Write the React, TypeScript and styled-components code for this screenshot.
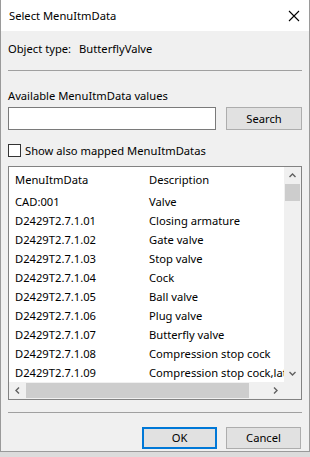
import React from 'react';
import styled, { createGlobalStyle } from 'styled-components';

const GlobalStyle = createGlobalStyle`
  html, body {
    margin: 0;
    padding: 0;
    background: #dcdcdc;
  }
  * {
    box-sizing: border-box;
  }
`

const Window = styled.div`
  width: 310px;
  height: 452px;
  background: #f0f0f0;
  border: 1px solid #9a9a9a;
  border-top: none;
  font-family: "Noto Sans", "Open Sans", sans-serif;
  font-size: 11.2px;
  color: #000;
  display: flex;
  flex-direction: column;
`

const TitleBar = styled.div`
  height: 31px;
  background: #fff;
  display: flex;
  align-items: center;
  justify-content: space-between;
  padding-left: 8px;
  padding-right: 9px;
`

const Title = styled.span`
  line-height: 16px;
`

const Body = styled.div`
  padding: 0 7px;
  display: flex;
  flex-direction: column;
`

const Text = styled.div<{ $top: number }>`
  line-height: 16px;
  margin-top: ${p => p.$top}px;
  white-space: nowrap;
`

const Gap = styled.span`
  display: inline-block;
  width: 8px;
`

const Separator = styled.div<{ $top: number }>`
  height: 1px;
  background: #a0a0a0;
  margin-top: ${p => p.$top}px;
`

const SearchRow = styled.div`
  display: flex;
  gap: 10px;
  margin-top: 3px;
  height: 23px;
`

const Input = styled.div`
  width: 208px;
  background: #fff;
  border: 1px solid #7a7a7a;
`

const Button = styled.div<{ $width: number; $default?: boolean }>`
  width: ${p => p.$width}px;
  height: 100%;
  background: #e1e1e1;
  border: ${p => (p.$default ? '2px solid #0078d7' : '1px solid #adadad')};
  display: flex;
  align-items: center;
  justify-content: center;
  line-height: 16px;
`

const CheckRow = styled.div`
  display: flex;
  align-items: center;
  gap: 4px;
  height: 16px;
  margin-top: 12px;
`

const CheckBox = styled.span`
  width: 13px;
  height: 13px;
  background: #fff;
  border: 1px solid #333;
`

const ListBox = styled.div`
  margin-top: 8px;
  height: 234px;
  background: #fff;
  border: 1px solid #828282;
  display: grid;
  grid-template-columns: 1fr 17px;
  grid-template-rows: 1fr 17px;
`

const Table = styled.div`
  overflow: hidden;
  display: flex;
  flex-direction: column;
`

const Row = styled.div<{ $header?: boolean }>`
  display: grid;
  grid-template-columns: 133px 1fr;
  height: ${p => (p.$header ? 25 : 19)}px;
  align-items: center;
  white-space: nowrap;
`

const Cell = styled.div<{ $header?: boolean }>`
  padding-left: 6px;
  line-height: 16px;
  height: 100%;
  display: flex;
  align-items: center;
  overflow: hidden;
  & + & {
    padding-left: ${p => (p.$header ? 6 : 7)}px;
    border-left: ${p => (p.$header ? '1px solid #e5e5e5' : 'none')};
  }
`

const VScroll = styled.div`
  background: #f0f0f0;
  display: flex;
  flex-direction: column;
`

const HScroll = styled.div`
  background: #f0f0f0;
  display: flex;
  align-items: stretch;
`

const Arrow = styled.div`
  width: 17px;
  height: 17px;
  display: flex;
  align-items: center;
  justify-content: center;
  flex-shrink: 0;
`

const VTrack = styled.div`
  flex: 1;
  padding: 0 1px;
`

const VThumb = styled.div`
  height: 17px;
  background: #cdcdcd;
`

const HTrack = styled.div`
  flex: 1;
  padding: 1px 0;
`

const HThumb = styled.div`
  width: 223px;
  height: 100%;
  background: #cdcdcd;
`

const Corner = styled.div`
  background: #f0f0f0;
`

const ButtonRow = styled.div`
  display: flex;
  justify-content: flex-end;
  gap: 9px;
  height: 22px;
  margin-top: 14px;
  padding-right: 1px;
`

const Chevron = ({ dir }: { dir: 'up' | 'down' | 'left' | 'right' }) => {
  const rot = { up: 0, right: 90, down: 180, left: 270 }[dir];
  return (
    <svg width="9" height="9" viewBox="0 0 9 9" style={{ transform: `rotate(${rot}deg)` }}>
      <path d="M1.5 6 L4.5 3 L7.5 6" fill="none" stroke="#606060" strokeWidth="1.4" />
    </svg>
  );
};

const rows: [string, string][] = [
  ['CAD:001', 'Valve'],
  ['D2429T2.7.1.01', 'Closing armature'],
  ['D2429T2.7.1.02', 'Gate valve'],
  ['D2429T2.7.1.03', 'Stop valve'],
  ['D2429T2.7.1.04', 'Cock'],
  ['D2429T2.7.1.05', 'Ball valve'],
  ['D2429T2.7.1.06', 'Plug valve'],
  ['D2429T2.7.1.07', 'Butterfly valve'],
  ['D2429T2.7.1.08', 'Compression stop cock'],
  ['D2429T2.7.1.09', 'Compression stop cock,lateral'],
];

const App = () => {
  return (
    <>
      <GlobalStyle />
      <Window>
        <TitleBar>
          <Title>Select MenuItmData</Title>
          <svg width="12" height="12" viewBox="0 0 12 12">
            <path d="M1 1 L11 11 M11 1 L1 11" stroke="#000" strokeWidth="1.1" />
          </svg>
        </TitleBar>
        <Body>
          <Text $top={10}>Object type:<Gap />ButterflyValve</Text>
          <Separator $top={13} />
          <Text $top={17}>Available MenuItmData values</Text>
          <SearchRow>
            <Input />
            <Button $width={76}>Search</Button>
          </SearchRow>
          <CheckRow>
            <CheckBox />
            <span>Show also mapped MenuItmDatas</span>
          </CheckRow>
          <ListBox>
            <Table>
              <Row $header>
                <Cell $header>MenuItmData</Cell>
                <Cell $header>Description</Cell>
              </Row>
              {rows.map(([code, desc]) => (
                <Row key={code}>
                  <Cell>{code}</Cell>
                  <Cell>{desc}</Cell>
                </Row>
              ))}
            </Table>
            <VScroll>
              <Arrow><Chevron dir="up" /></Arrow>
              <VTrack><VThumb /></VTrack>
              <Arrow><Chevron dir="down" /></Arrow>
            </VScroll>
            <HScroll>
              <Arrow><Chevron dir="left" /></Arrow>
              <HTrack><HThumb /></HTrack>
              <Arrow><Chevron dir="right" /></Arrow>
            </HScroll>
            <Corner />
          </ListBox>
          <Separator $top={12} />
          <ButtonRow>
            <Button $width={75} $default>OK</Button>
            <Button $width={75}>Cancel</Button>
          </ButtonRow>
        </Body>
      </Window>
    </>
  );
};

export default App;
